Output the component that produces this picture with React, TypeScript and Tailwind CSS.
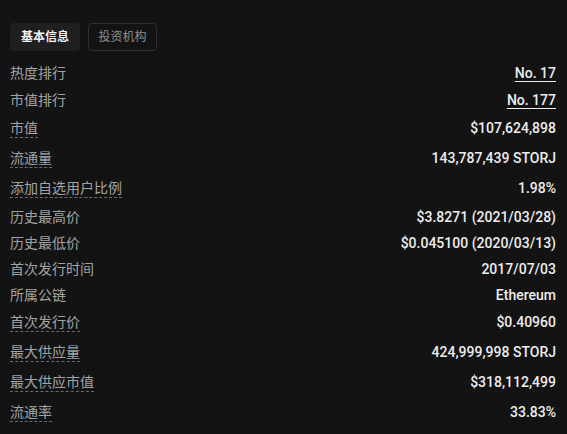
import React from "react";

type Row = { label: string; value: string; dashed?: boolean; link?: boolean };

const rows: Row[] = [
  { label: "热度排行", value: "No. 17", link: true },
  { label: "市值排行", value: "No. 177", link: true },
  { label: "市值", value: "$107,624,898", dashed: true },
  { label: "流通量", value: "143,787,439 STORJ", dashed: true },
  { label: "添加自选用户比例", value: "1.98%", dashed: true },
  { label: "历史最高价", value: "$3.8271 (2021/03/28)" },
  { label: "历史最低价", value: "$0.045100 (2020/03/13)" },
  { label: "首次发行时间", value: "2017/07/03" },
  { label: "所属公链", value: "Ethereum" },
  { label: "首次发行价", value: "$0.40960", dashed: true },
  { label: "最大供应量", value: "424,999,998 STORJ", dashed: true },
  { label: "最大供应市值", value: "$318,112,499", dashed: true },
  { label: "流通率", value: "33.83%", dashed: true },
];

const font = { fontFamily: "Inter, 'Noto Sans CJK SC', sans-serif" };
const valFont = { fontFamily: "Roboto, 'Noto Sans CJK SC', sans-serif" };

export default function App() {
  return (
    <div className="w-[567px] h-[434px] bg-[#131314] overflow-hidden" style={font}>
      <div className="flex gap-2 pl-[10px] pt-[23px]">
        <div className="h-[28px] w-[70px] flex items-center justify-center rounded-[4px] bg-[#1f1f20] text-[12px] font-semibold text-[#f2f2f2]">
          基本信息
        </div>
        <div className="h-[28px] w-[69px] flex items-center justify-center rounded-[4px] border border-[#303031] text-[12px] text-[#8f8f8f]">
          投资机构
        </div>
      </div>
      <div className="mt-[9px] px-[10px] pr-[11px]">
        {rows.map((r) => (
          <div
            key={r.label}
            className={
              r.dashed
                ? "flex justify-between items-start pt-[5px] pb-[6px]"
                : r.link
                ? "flex justify-between items-start pt-[4px] pb-[5px]"
                : "flex justify-between items-start pt-[4px] pb-[4px]"
            }
          >
            <span
              className={
                r.dashed
                  ? "text-[14px] leading-[18px] text-[#a3a3a3] border-b border-dashed border-[#6b6b6b]"
                  : "text-[14px] leading-[18px] text-[#a3a3a3]"
              }
            >
              {r.label}
            </span>
            <span
              style={valFont}
              className={
                r.link
                  ? "text-[14px] leading-[18px] font-medium text-[#ededed] underline underline-offset-[3px]"
                  : "text-[14px] leading-[18px] font-medium text-[#ededed]"
              }
            >
              {r.value}
            </span>
          </div>
        ))}
      </div>
    </div>
  );
}
